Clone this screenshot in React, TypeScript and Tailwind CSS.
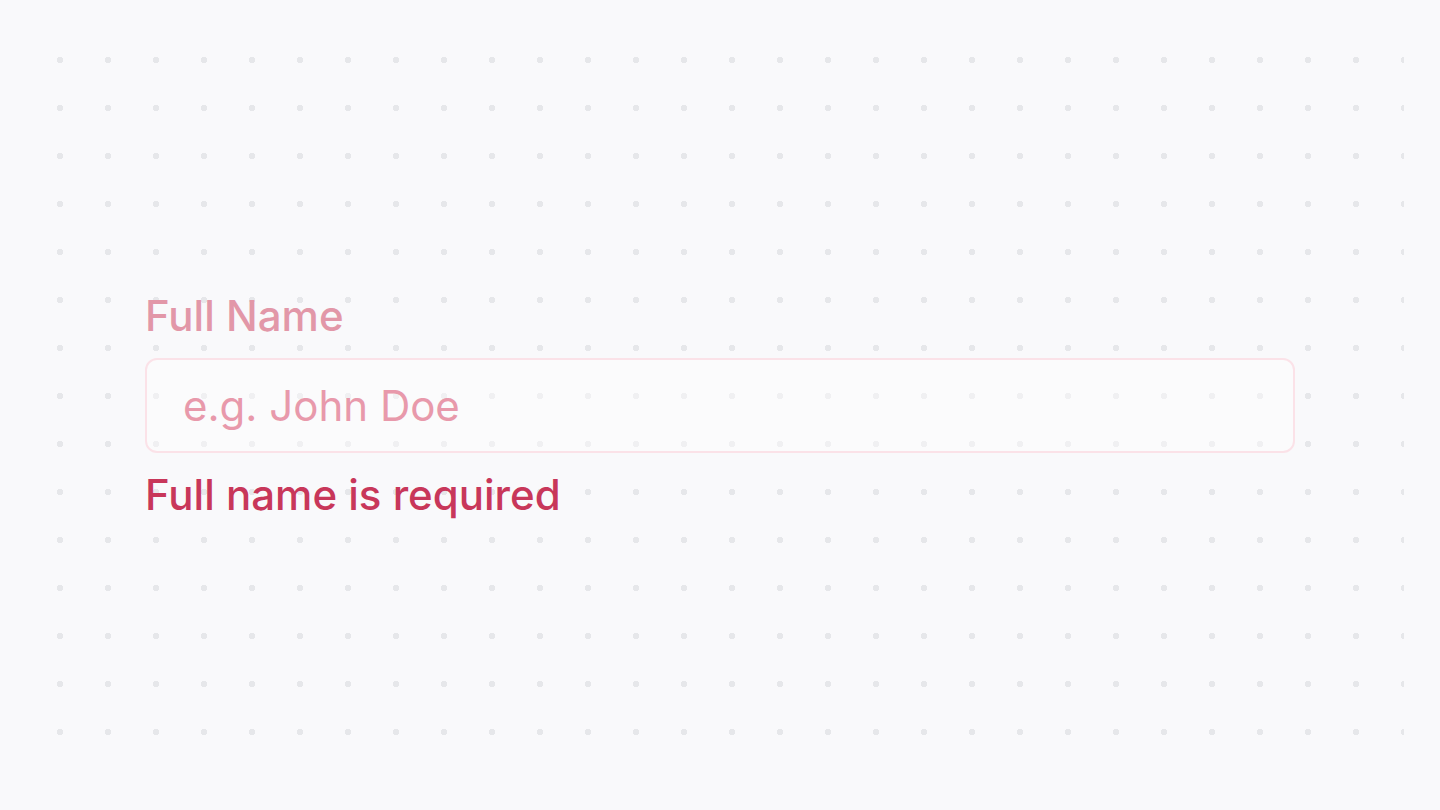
import React from "react";

export default function App() {
  return (
    <div
      className="h-[810px] w-[1440px] bg-[#f9f9fb] p-[36px]"
      style={{ fontFamily: "Inter, 'Noto Sans', sans-serif" }}
    >
      <div className="flex h-full w-full items-center justify-center bg-[radial-gradient(circle,#e6e7ea_3px,transparent_3.5px)] bg-[size:48px_48px] bg-[position:0_0]">
        <div className="flex w-[1150px] flex-col">
          <label
            htmlFor="fullname"
            className="text-[42px] font-medium leading-[48px] text-[#e297a8]"
          >
            Full Name
          </label>
          <input
            id="fullname"
            type="text"
            placeholder="e.g. John Doe"
            className="mt-[18px] h-[95px] w-full rounded-xl border-[2.5px] border-[#fbe2e8] bg-white/40 pl-9 text-[42px] leading-[48px] text-[#374151] outline-none placeholder:text-[#e899ab]"
          />
          <p className="mt-[18px] text-[42px] font-medium leading-[48px] text-[#c8375a]">
            Full name is required
          </p>
        </div>
      </div>
    </div>
  );
}
